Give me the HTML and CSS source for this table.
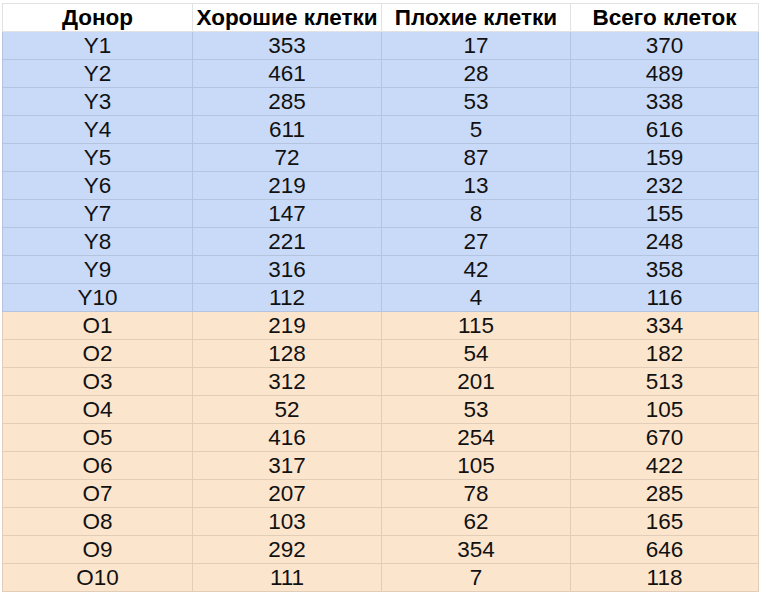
FILE: index.html
```html
<!DOCTYPE html>
<html lang="ru">
<head>
<meta charset="utf-8">
<link rel="stylesheet" href="styles.css">
</head>
<body>
<table class="sheet">
  <colgroup>
    <col class="c1"><col class="c2"><col class="c3"><col class="c4">
  </colgroup>
  <thead>
    <tr class="head"><th>Донор</th><th>Хорошие клетки</th><th>Плохие клетки</th><th>Всего клеток</th></tr>
  </thead>
  <tbody>
    <tr class="young"><td>Y1</td><td>353</td><td>17</td><td>370</td></tr>
    <tr class="young"><td>Y2</td><td>461</td><td>28</td><td>489</td></tr>
    <tr class="young"><td>Y3</td><td>285</td><td>53</td><td>338</td></tr>
    <tr class="young"><td>Y4</td><td>611</td><td>5</td><td>616</td></tr>
    <tr class="young"><td>Y5</td><td>72</td><td>87</td><td>159</td></tr>
    <tr class="young"><td>Y6</td><td>219</td><td>13</td><td>232</td></tr>
    <tr class="young"><td>Y7</td><td>147</td><td>8</td><td>155</td></tr>
    <tr class="young"><td>Y8</td><td>221</td><td>27</td><td>248</td></tr>
    <tr class="young"><td>Y9</td><td>316</td><td>42</td><td>358</td></tr>
    <tr class="young"><td>Y10</td><td>112</td><td>4</td><td>116</td></tr>
    <tr class="old"><td>O1</td><td>219</td><td>115</td><td>334</td></tr>
    <tr class="old"><td>O2</td><td>128</td><td>54</td><td>182</td></tr>
    <tr class="old"><td>O3</td><td>312</td><td>201</td><td>513</td></tr>
    <tr class="old"><td>O4</td><td>52</td><td>53</td><td>105</td></tr>
    <tr class="old"><td>O5</td><td>416</td><td>254</td><td>670</td></tr>
    <tr class="old"><td>O6</td><td>317</td><td>105</td><td>422</td></tr>
    <tr class="old"><td>O7</td><td>207</td><td>78</td><td>285</td></tr>
    <tr class="old"><td>O8</td><td>103</td><td>62</td><td>165</td></tr>
    <tr class="old"><td>O9</td><td>292</td><td>354</td><td>646</td></tr>
    <tr class="old"><td>O10</td><td>111</td><td>7</td><td>118</td></tr>
  </tbody>
</table>
</body>
</html>
```

FILE: styles.css
```css
html, body {
  margin: 0;
  padding: 0;
  background: #ffffff;
}

body {
  padding: 3px 0 0 2px;
  font-family: "Liberation Sans", Arial, sans-serif;
  color: #111111;
}

.sheet {
  border-collapse: collapse;
  table-layout: fixed;
  width: 756px;
}

.c1 { width: 190px; }
.c2 { width: 189px; }
.c3 { width: 189px; }
.c4 { width: 188px; }

.sheet th,
.sheet td {
  height: 27px;
  padding: 0;
  text-align: center;
  vertical-align: middle;
  border: 1px solid #e2e2e2;
  font-size: 22.5px;
  line-height: 27px;
  white-space: nowrap;
  overflow: hidden;
}

.sheet th {
  font-weight: bold;
  color: #000000;
}

.young td {
  background: #c9daf8;
  border-color: #b4c3de;
}

.old td {
  background: #fce5cd;
  border-color: #e1cdb8;
}
```
